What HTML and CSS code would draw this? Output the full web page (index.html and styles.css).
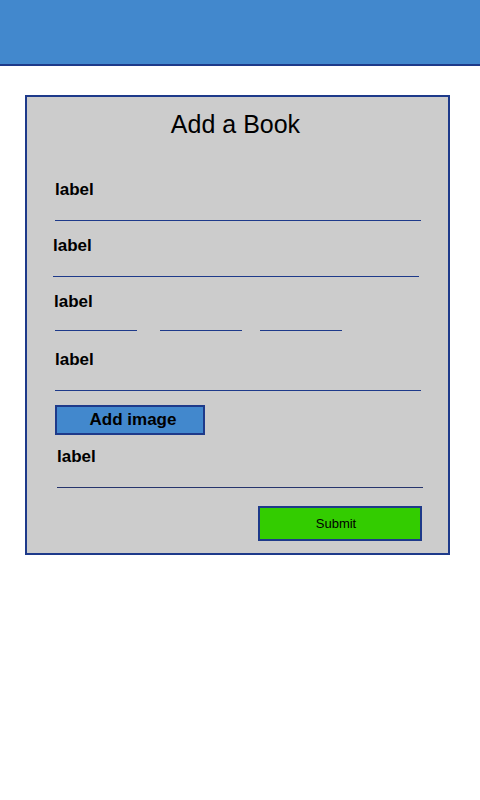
FILE: index.html
```html
<!DOCTYPE html>
<html>
<head>
<meta charset="utf-8">
<link rel="stylesheet" href="styles.css">
</head>
<body>
<header class="topbar"></header>
<main class="card">
  <h1 class="title">Add a Book</h1>
  <div class="field f1">
    <div class="label">label</div>
    <div class="input"></div>
  </div>
  <div class="field f2">
    <div class="label">label</div>
    <div class="input"></div>
  </div>
  <div class="field f3">
    <div class="label">label</div>
    <div class="triple">
      <div class="short s1"></div>
      <div class="short s2"></div>
      <div class="short s3"></div>
    </div>
  </div>
  <div class="field f4">
    <div class="label">label</div>
    <div class="input"></div>
  </div>
  <button class="add-image">Add image</button>
  <div class="field f5">
    <div class="label">label</div>
    <div class="input dark"></div>
  </div>
  <div class="actions">
    <button class="submit">Submit</button>
  </div>
</main>
</body>
</html>
```
FILE: styles.css
```css
* { box-sizing: border-box; }
html, body { margin: 0; padding: 0; background: #ffffff; }
body { font-family: "Liberation Sans", Arial, sans-serif; color: #000; }

.topbar {
  height: 66px;
  background: #4288cd;
  border-bottom: 2px solid #1e3a8a;
}

.card {
  margin: 29px 0 0 25px;
  width: 425px;
  height: 460px;
  background: #cccccc;
  border: 2px solid #1e3a8a;
  display: flex;
  flex-direction: column;
  align-items: flex-start;
}

.title {
  align-self: stretch;
  margin: 13px 0 0 0;
  font-size: 25px;
  line-height: 29px;
  font-weight: normal;
  text-align: center;
  padding-right: 4px;
}

.field { display: flex; flex-direction: column; }
.label { font-size: 17px; font-weight: bold; line-height: 20px; margin-top: 1px; }
.input { width: 366px; height: 21px; border-bottom: 1px solid #1e3a8a; }
.input.dark { border-bottom-color: #26346c; }

.f1 { margin: 40px 0 0 28px; }
.f2 { margin: 14px 0 0 26px; }
.f3 { margin: 14px 0 0 27px; }
.f4 { margin: 18px 0 0 28px; }
.f5 { margin: 11px 0 0 30px; }

.triple { display: flex; height: 19px; align-items: flex-end; padding-left: 1px; }
.short { width: 82px; height: 1px; background: #1e3a8a; }
.s2 { margin-left: 23px; }
.s3 { margin-left: 18px; }

.add-image {
  margin: 14px 0 0 28px;
  width: 150px;
  height: 30px;
  padding: 0 0 0 6px;
  background: #4288cd;
  border: 2px solid #1e3a8a;
  font-family: "Liberation Sans", Arial, sans-serif;
  font-size: 17px;
  font-weight: bold;
  color: #000;
}

.actions {
  align-self: stretch;
  display: flex;
  justify-content: flex-end;
  margin-top: 18px;
  padding-right: 26px;
}

.submit {
  width: 164px;
  height: 35px;
  padding: 0 8px 0 0;
  background: #33cc00;
  border: 2px solid #1e3a8a;
  font-family: "Liberation Sans", Arial, sans-serif;
  font-size: 13px;
  color: #000;
}
```
